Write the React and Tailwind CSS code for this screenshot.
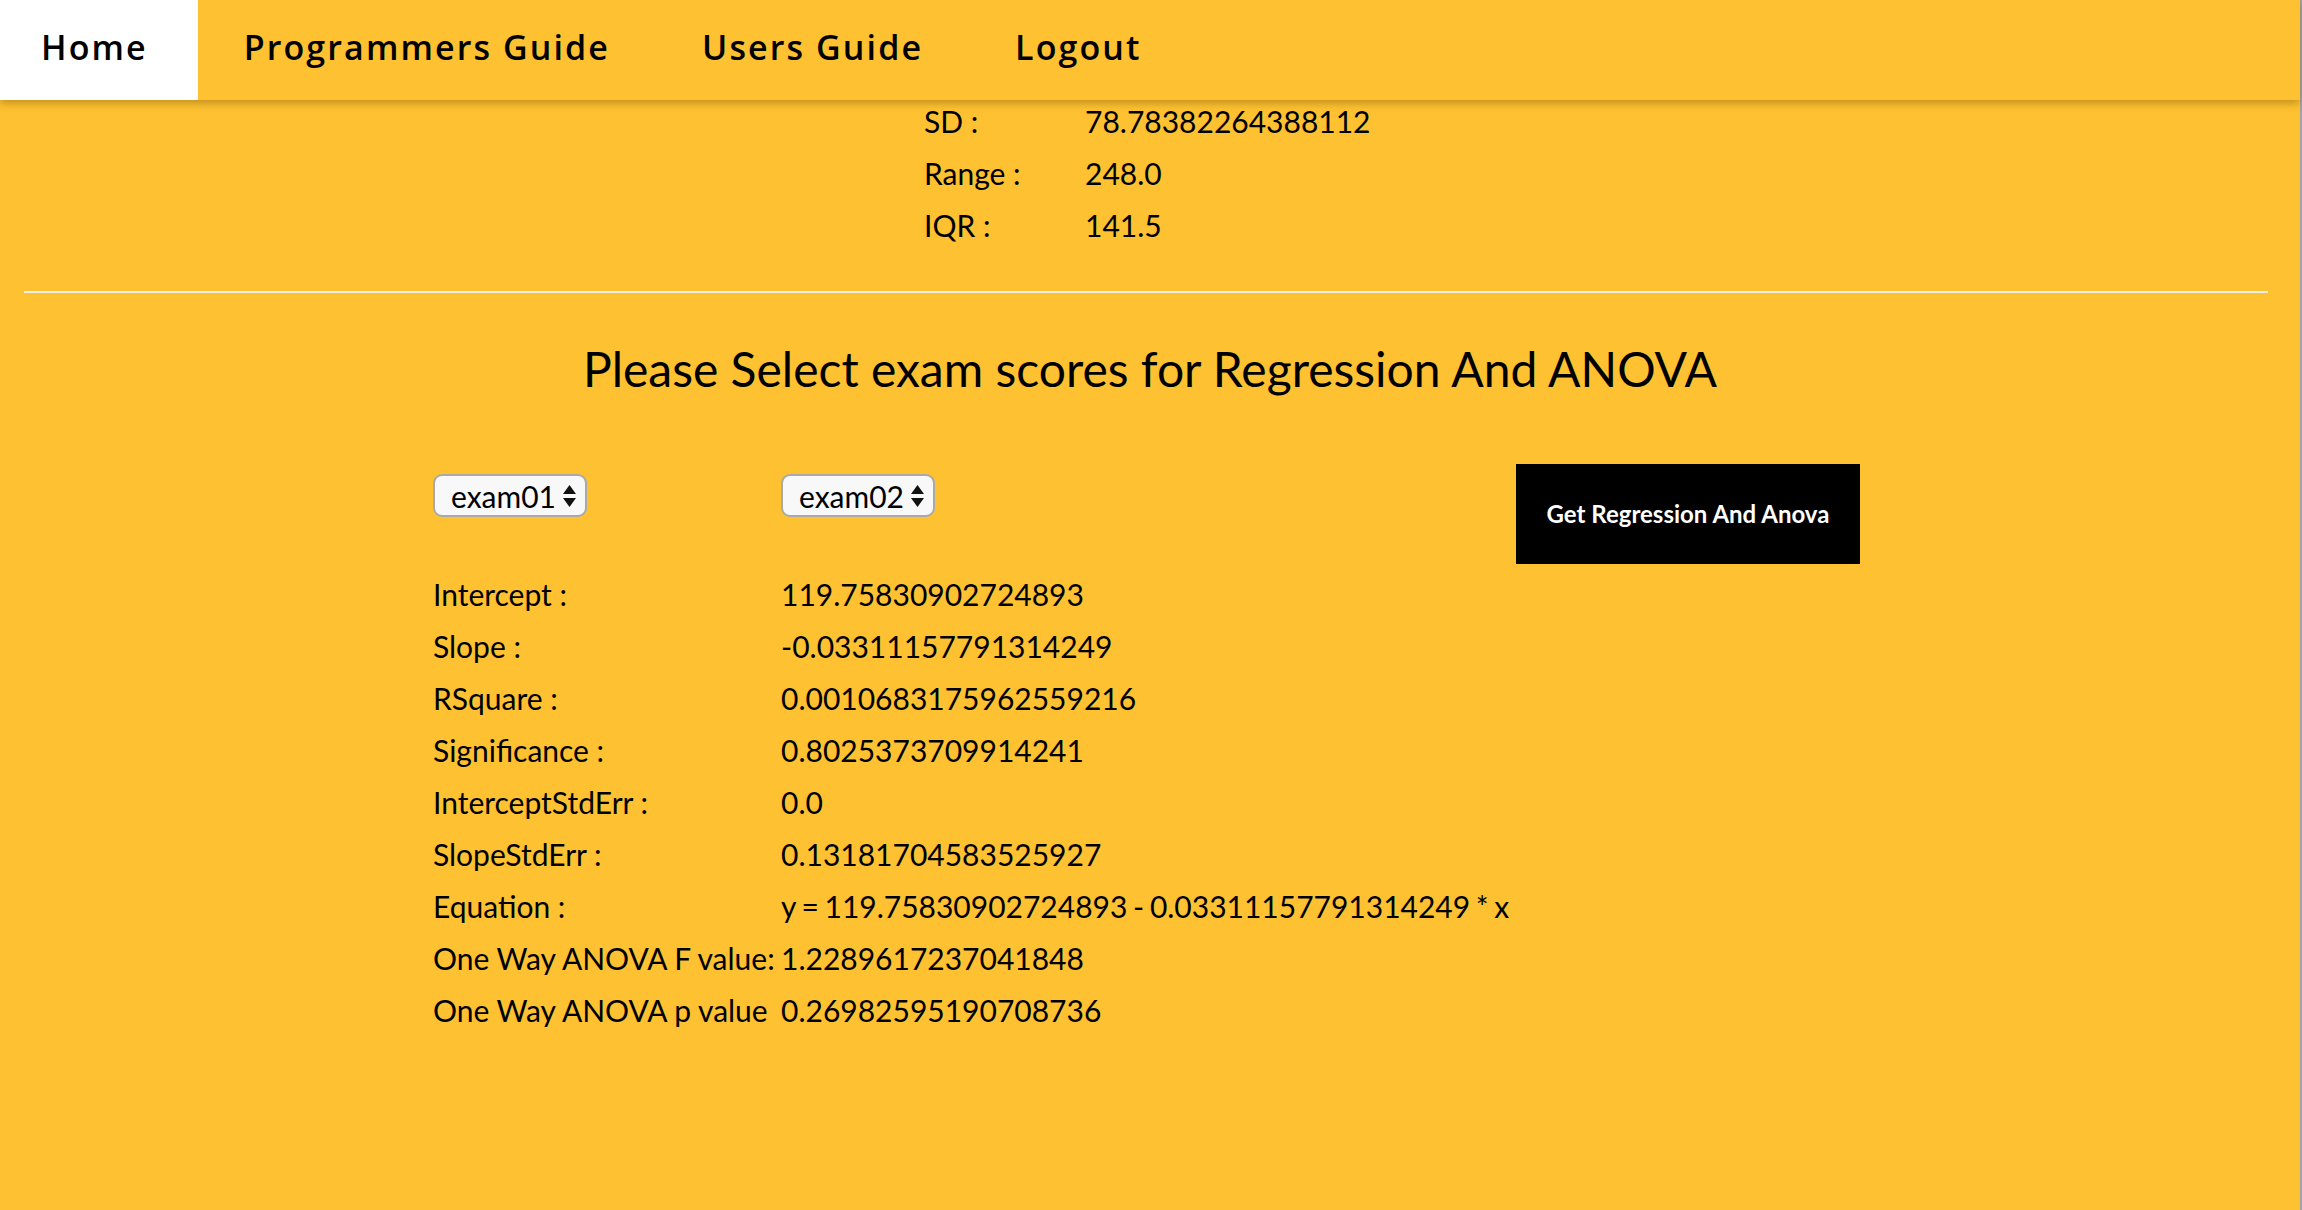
import { useState } from "react";

const navItems = ["Home", "Programmers Guide", "Users Guide", "Logout"];

const topStats = [
  ["SD :", "78.78382264388112"],
  ["Range :", "248.0"],
  ["IQR :", "141.5"],
];

const results = [
  ["Intercept :", "119.75830902724893"],
  ["Slope :", "-0.03311157791314249"],
  ["RSquare :", "0.0010683175962559216"],
  ["Significance :", "0.8025373709914241"],
  ["InterceptStdErr :", "0.0"],
  ["SlopeStdErr :", "0.13181704583525927"],
  ["Equation :", "y = 119.75830902724893 - 0.03311157791314249 * x"],
  ["One Way ANOVA F value:", "1.2289617237041848"],
  ["One Way ANOVA p value", "0.26982595190708736"],
];

const ExamSelect = ({ value }) => (
  <div className="flex items-center justify-between w-[154px] h-[43px] pl-[16px] pr-[9px] bg-[#f8f8f8] border-2 border-[#a9a9a9] rounded-[9px] text-[30px] leading-none">
    <span>{value}</span>
    {/* up / down arrows */}
    <svg width="13" height="22" viewBox="0 0 13 22">
      <path d="M6.5 0 L13 9 L0 9 Z" fill="#111" />
      <path d="M0 13 L13 13 L6.5 22 Z" fill="#111" />
    </svg>
  </div>
);

export default function App() {
  const [active] = useState("Home");

  return (
    <div className="min-h-screen w-[2302px] bg-[#fdc131] border-r-2 border-[#a3a3a3] font-['Lato','Liberation_Sans',sans-serif] text-black">
      {/* Navbar */}
      <nav className="relative z-10 flex h-[100px] shadow-[0_3px_8px_rgba(120,80,0,0.45)]">
        {navItems.map((item) => (
          <div
            key={item}
            className={`flex items-center px-[46px] pb-[6px] first:pl-[41px] first:pr-[50px] text-[34px] font-semibold font-['Open_Sans',sans-serif] tracking-[2.1px] ${
              item === active ? "bg-white" : ""
            }`}
          >
            {item}
          </div>
        ))}
      </nav>

      {/* Stats */}
      <div className="-mt-[5px] pl-[924px]">
        {topStats.map(([label, value]) => (
          <div key={label} className="flex h-[52px] text-[30px] leading-[52px]">
            <span className="w-[161px]">{label}</span>
            <span>{value}</span>
          </div>
        ))}
      </div>

      <div className="mx-[24px] mt-[40px] h-[2px] w-[2244px] bg-[#f4efe4]" />

      <h3 className="mt-[49px] text-center text-[48px] leading-[53px]">
        Please Select exam scores for Regression And ANOVA
      </h3>

      {/* Controls */}
      <div className="mt-[69px] flex items-start pl-[433px]">
        <div className="mt-[10px] w-[348px]">
          <ExamSelect value="exam01" />
        </div>
        <div className="mt-[10px] w-[735px]">
          <ExamSelect value="exam02" />
        </div>
        <button className="flex h-[100px] w-[344px] items-center justify-center bg-black text-[24px] font-bold text-white">
          Get Regression And Anova
        </button>
      </div>

      {/* Results */}
      <div className="mt-[4px] pl-[433px] pb-[150px]">
        {results.map(([label, value]) => (
          <div key={label} className="flex h-[52px] text-[30px] leading-[52px]">
            <span className="w-[348px] shrink-0">{label}</span>
            <span className="[word-spacing:-2px]">{value}</span>
          </div>
        ))}
      </div>
    </div>
  );
}
